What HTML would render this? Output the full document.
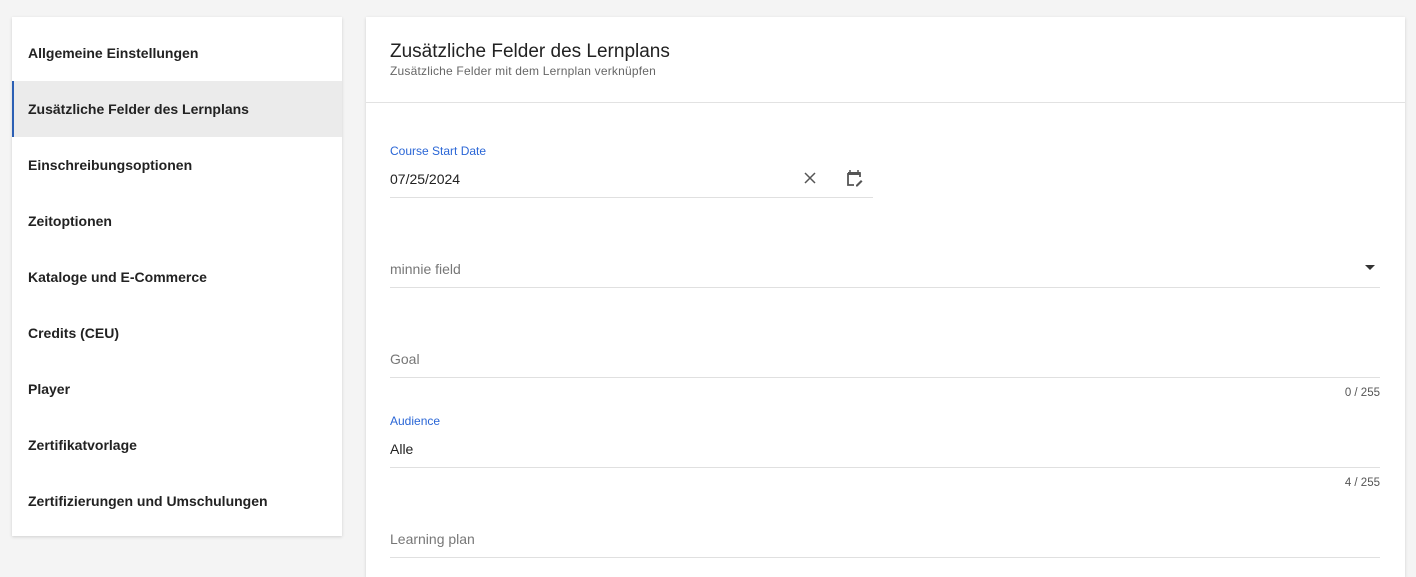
<!DOCTYPE html>
<html><head><style>
*{margin:0;padding:0;box-sizing:border-box}
body{width:1416px;height:558px;background:#f4f4f4;font-family:"Liberation Sans",sans-serif;position:relative;overflow:hidden;color:#222}
.card{position:absolute;background:#fff;box-shadow:0 1px 3px rgba(0,0,0,.15)}
.nav{left:12px;top:17px;width:330px;height:519px;padding-top:8px}
.item{height:56px;line-height:56px;padding-left:16px;font-size:14px;font-weight:bold;color:#222}
.item.active{background:#ebebeb;border-left:2px solid #2b5fb4;padding-left:14px}
.main{left:366px;top:17px;width:1039px;height:560px}
.hdr{height:86px;border-bottom:1px solid #e2e2e2;padding:24px 24px 0}
.hdr h1{font-size:19px;font-weight:normal;color:#222;line-height:22px}
.hdr p{font-size:12px;color:#666;margin-top:1px;letter-spacing:.2px}
.abs{position:absolute}
.lbl{font-size:12px;color:#2a66d6}
.val{font-size:14px;color:#222}
.ph{font-size:14px;color:#777}
.line{height:1px;background:#e0e0e0}
.cnt{font-size:11.5px;color:#555;text-align:right;width:100px}
</style></head><body>
<div class="card nav">
<div class="item">Allgemeine Einstellungen</div>
<div class="item active">Zusätzliche Felder des Lernplans</div>
<div class="item">Einschreibungsoptionen</div>
<div class="item">Zeitoptionen</div>
<div class="item">Kataloge und E-Commerce</div>
<div class="item">Credits (CEU)</div>
<div class="item">Player</div>
<div class="item">Zertifikatvorlage</div>
<div class="item">Zertifizierungen und Umschulungen</div>
</div>
<div class="card main">
<div class="hdr"><h1>Zusätzliche Felder des Lernplans</h1><p>Zusätzliche Felder mit dem Lernplan verknüpfen</p></div>
</div>
<div class="abs lbl" style="left:390px;top:144px">Course Start Date</div>
<div class="abs val" style="left:390px;top:171px">07/25/2024</div>
<svg class="abs" style="left:803px;top:171px" width="14" height="14" viewBox="0 0 14 14"><path d="M2 2L12 12M12 2L2 12" stroke="#555" stroke-width="1.5"/></svg>
<svg class="abs" style="left:846px;top:169px" width="18" height="18" viewBox="0 0 18 18"><path d="M2 4h12v4M2 4v12h6" stroke="#555" stroke-width="1.8" fill="none"/><rect x="2" y="3" width="12" height="3" fill="#555"/><path d="M4 1v3M12 1v3" stroke="#555" stroke-width="1.5"/><path d="M10 16l5-5 1.5 1.5-5 5H10z" fill="#555"/></svg>
<div class="abs line" style="left:390px;top:197px;width:483px"></div>
<div class="abs ph" style="left:390px;top:261px">minnie field</div>
<svg class="abs" style="left:1365px;top:265px" width="10" height="6"><path d="M0 0h10L5 5z" fill="#333"/></svg>
<div class="abs line" style="left:390px;top:287px;width:990px"></div>
<div class="abs ph" style="left:390px;top:351px">Goal</div>
<div class="abs line" style="left:390px;top:377px;width:990px"></div>
<div class="abs cnt" style="left:1280px;top:387px">0 / 255</div>
<div class="abs lbl" style="left:390px;top:414px">Audience</div>
<div class="abs val" style="left:390px;top:441px">Alle</div>
<div class="abs line" style="left:390px;top:467px;width:990px"></div>
<div class="abs cnt" style="left:1280px;top:477px">4 / 255</div>
<div class="abs ph" style="left:390px;top:531px">Learning plan</div>
<div class="abs line" style="left:390px;top:557px;width:990px"></div>
</body></html>
